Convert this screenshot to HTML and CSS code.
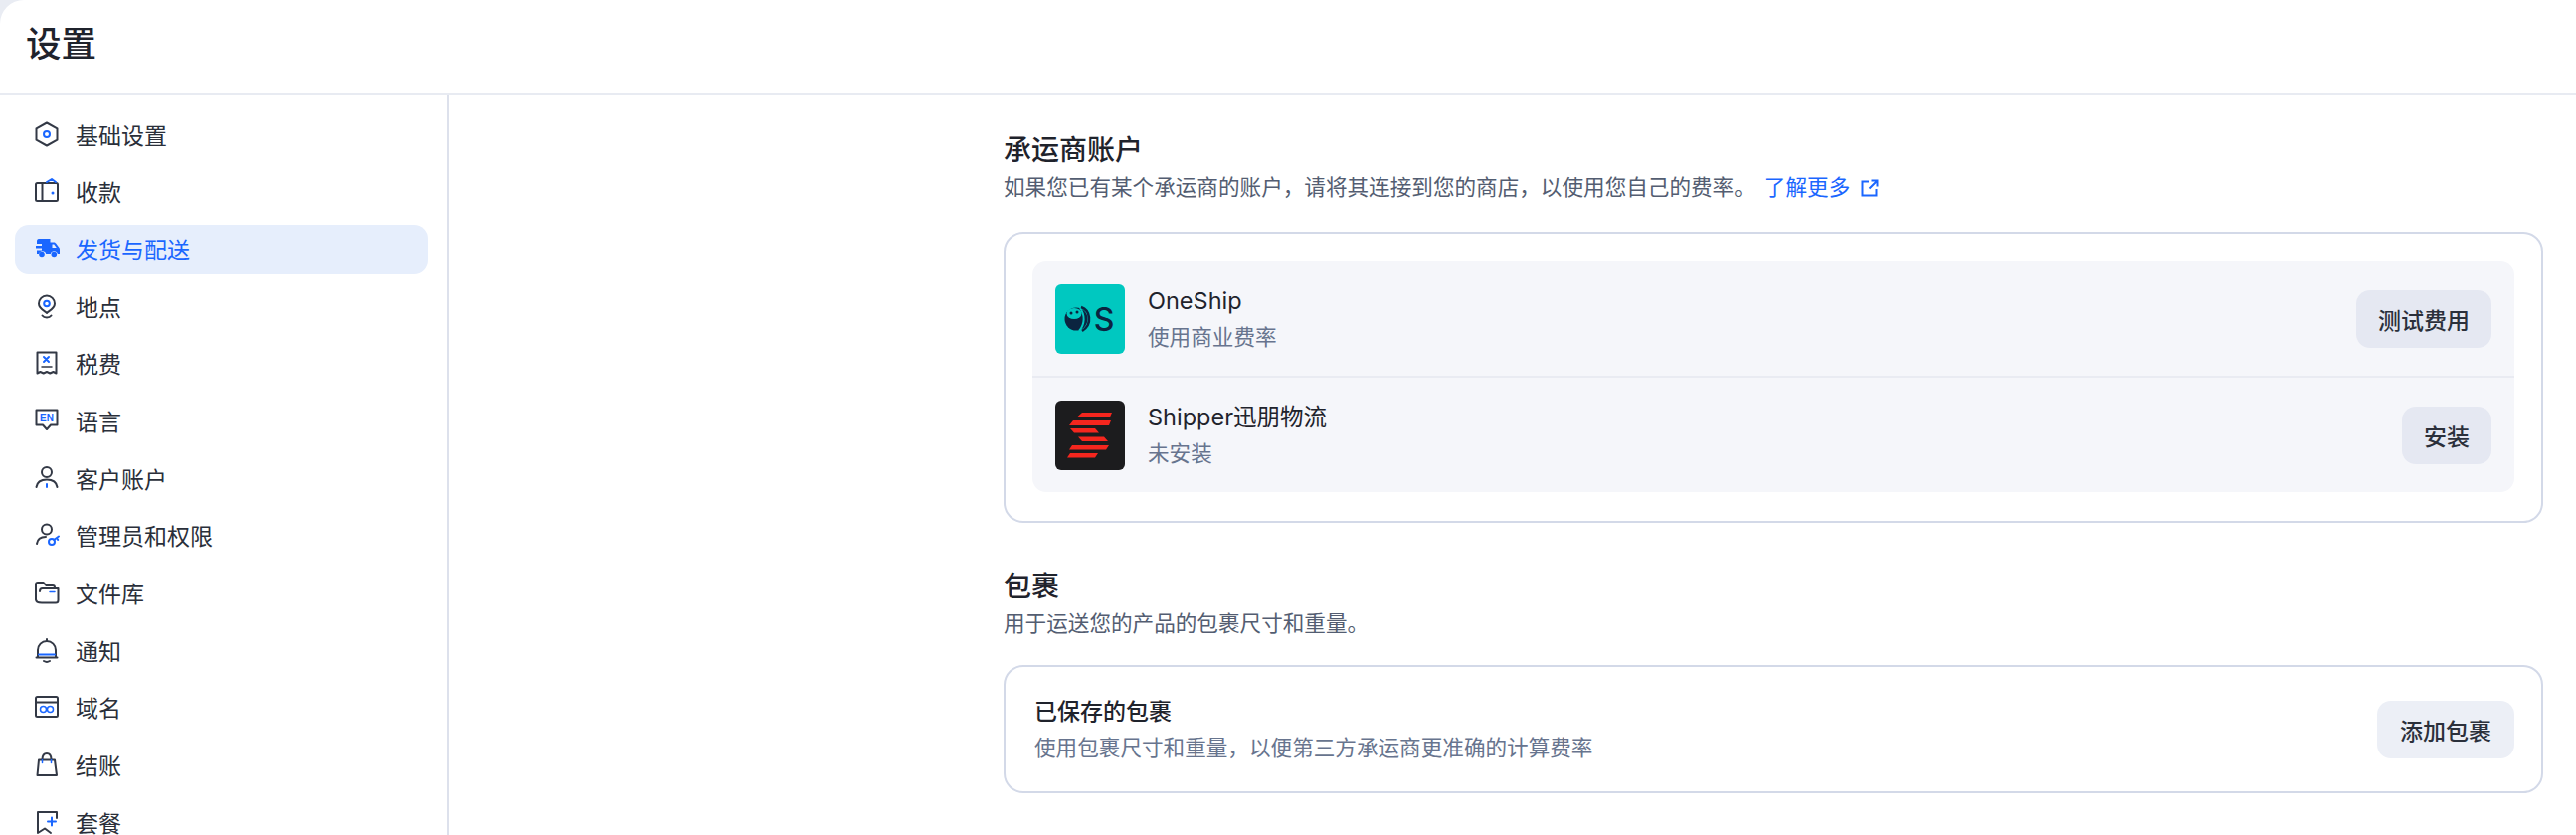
FILE: index.html
```html
<!DOCTYPE html>
<html>
	<head>
		<meta charset="utf-8">
		<title>设置</title>
		<link rel="stylesheet" href="styles.css">
	</head>
	<body>
		<div class="page">
			<header class="topbar">
				<h1 class="page-title">设置</h1>
			</header>
			<div class="layout">
				<ul class="nav">
					<li class="nav-item">
						<svg class="nav-icon" viewBox="0 0 28 28"><path class="ink" d="M14 2.500l10.500 5.800v11.400L14 25.500 3.500 19.700V8.300z"/><circle class="accent" cx="14" cy="14" r="3"/></svg>
						基础设置
					</li>
					<li class="nav-item">
						<svg class="nav-icon" viewBox="0 0 28 28"><rect class="ink" x="3" y="6" width="22" height="18" rx="1.500"/><path class="ink" d="M9.500 6v18"/><path class="accent" d="M14 5l5-3 4 3"/><circle class="dot" cx="20" cy="16" r="1.500"/></svg>
						收款
					</li>
					<li class="nav-item active">
						<svg class="nav-icon" viewBox="0 0 28 28"><path class="truck" d="M6 4h11.500v3.500H21c1 0 1.600.4 2.100 1.100l3.400 4.400c.4.500.5 1 .5 1.600V20h-2.200a3.600 3.600 0 0 0-7 0h-4.600a3.600 3.600 0 0 0-7 0H4v-4.500h5v-2H3v-2.500h6V9H4V6.500c0-1.500.6-2.500 2-2.500z"/><circle class="truck" cx="9" cy="20.500" r="2.800"/><circle class="truck" cx="21.300" cy="20.500" r="2.800"/><path class="window" d="M19.500 9.500h1.800l2.500 3.500h-4.300z"/></svg>
						发货与配送
					</li>
					<li class="nav-item">
						<svg class="nav-icon" viewBox="0 0 28 28"><path class="ink" d="M14 21c-1-1.800-8-4-8-9.500a8 8 0 0 1 16 0C22 17 15 19.200 14 21z"/><circle class="accent" cx="14" cy="11.500" r="2.800"/><path class="ink" d="M9.500 23.500c1 1.400 2.500 2 4.500 2s3.500-.6 4.500-2"/></svg>
						地点
					</li>
					<li class="nav-item">
						<svg class="nav-icon" viewBox="0 0 28 28"><path class="ink" d="M4.500 3.500h19v21l-3-1.500-3.200 1.500-3.300-1.500-3.300 1.500-3.200-1.500-3 1.500z"/><path class="accent" d="M11 8l5 5M16 8l-5 5"/><path class="ink thin" d="M9 18h10"/></svg>
						税费
					</li>
					<li class="nav-item">
						<svg class="nav-icon" viewBox="0 0 28 28"><path class="ink" d="M3.500 3.500h21v15H18l-4 4.500-4-4.500H3.500z"/><text class="en-mark" x="14" y="15">EN</text></svg>
						语言
					</li>
					<li class="nav-item">
						<svg class="nav-icon" viewBox="0 0 28 28"><circle class="ink" cx="14" cy="8" r="5"/><path class="ink" d="M3.500 23c.8-5 5-7.500 10.500-7.500S23.700 18 24.500 23"/><path class="accent" d="M14 20v3"/></svg>
						客户账户
					</li>
					<li class="nav-item">
						<svg class="nav-icon" viewBox="0 0 28 28"><circle class="ink" cx="14" cy="8.500" r="5"/><path class="ink" d="M4 23c.6-4.400 4-7 9-7"/><circle class="accent" cx="19" cy="21" r="3"/><path class="accent" d="M21.200 19l4.800-3.500M24 17l1.200 2"/></svg>
						管理员和权限
					</li>
					<li class="nav-item">
						<svg class="nav-icon" viewBox="0 0 28 28"><path class="ink" d="M3 21V6c0-1.200.8-2 2-2h5.500l3 3H20c1.200 0 2 .8 2 2v1"/><path class="ink" d="M7 13c0-1.600 1-3 2.600-3H25.500v12c0 1.500-.8 2.500-2.500 2.500H9c-2 0-6 0-6-3.500"/><path class="accent thin" d="M17 13.500h5"/></svg>
						文件库
					</li>
					<li class="nav-item">
						<svg class="nav-icon" viewBox="0 0 28 28"><path class="ink" d="M14 3v2M5 21v-7a9 9 0 0 1 18 0v7M3.500 21.500h21M11 25c1.600 1 4.400 1 6 0"/><path class="accent" d="M6 18.500h16"/></svg>
						通知
					</li>
					<li class="nav-item">
						<svg class="nav-icon" viewBox="0 0 28 28"><rect class="ink" x="3" y="4" width="22" height="20" rx="1.500"/><path class="ink" d="M3 9.500h22"/><circle class="accent thin" cx="10.500" cy="16.500" r="3"/><circle class="accent thin" cx="17.500" cy="16.500" r="3"/></svg>
						域名
					</li>
					<li class="nav-item">
						<svg class="nav-icon" viewBox="0 0 28 28"><path class="ink" d="M6 9.500h16l2 15.500H4.500z"/><path class="ink" d="M9.500 9.500C9.500 5 11 3 14 3s4.500 2 4.500 6.500"/><path class="accent thin" d="M9.500 9.500v3M18.500 9.500v3"/></svg>
						结账
					</li>
					<li class="nav-item">
						<svg class="nav-icon" viewBox="0 0 28 28"><path class="ink" d="M24 10V4H5v21l7-4.500 6 4.500"/><path class="accent" d="M19 9.500v8M15 13.500h8"/></svg>
						套餐
					</li>
				</ul>
				<main class="content">
					<section class="block">
						<h2 class="block-title">承运商账户</h2>
						<p class="block-desc">如果您已有某个承运商的账户，请将其连接到您的商店，以使用您自己的费率。 <a class="more-link" href="#">了解更多<svg class="link-icon" viewBox="0 0 18 18"><path d="M8 2.500H1.500v14h14V10M10.500 1.500h6v6M16.500 1.500l-8 8"/></svg></a></p>
						<div class="card card-list">
							<div class="carriers">
								<div class="carrier">
									<div class="logo logo-oneship">
										<svg viewBox="0 0 70 70"><circle class="os-dark" cx="21" cy="35" r="11.500"/><ellipse class="os-light" cx="19" cy="29.500" rx="7.500" ry="5.500"/><circle class="os-dark" cx="16" cy="29" r="1.500"/><circle class="os-dark" cx="22" cy="28" r="1.500"/><path class="os-cut" d="M25 24c5 7 5 16-1 23"/><path class="os-ring" d="M26 23c9 3 12 17 1 24"/><text class="os-s" x="49" y="46.500">S</text></svg>
									</div>
									<div class="carrier-text">
										<div class="carrier-name">OneShip</div>
										<div class="carrier-note">使用商业费率</div>
									</div>
									<button class="btn btn-tinted">测试费用</button>
								</div>
								<div class="carrier">
									<div class="logo logo-shipper">
										<svg viewBox="0 0 70 70"><path class="sh-bar" d="M27 12h30l-2 4.500H22zM18 20h38l-2 5H14zM15 28h25l4 4.500H19zM23 36.500h26l4 4.500H27zM17 45h37l-3 4.500H14zM15 53h28l-3 4.500H12z"/></svg>
									</div>
									<div class="carrier-text">
										<div class="carrier-name">Shipper迅朋物流</div>
										<div class="carrier-note">未安装</div>
									</div>
									<button class="btn btn-tinted">安装</button>
								</div>
							</div>
						</div>
					</section>
					<section class="block">
						<h2 class="block-title">包裹</h2>
						<p class="block-desc">用于运送您的产品的包裹尺寸和重量。</p>
						<div class="card card-row">
							<div class="carrier-text">
								<div class="saved-title">已保存的包裹</div>
								<div class="carrier-note">使用包裹尺寸和重量，以便第三方承运商更准确的计算费率</div>
							</div>
							<button class="btn btn-wide">添加包裹</button>
						</div>
					</section>
				</main>
			</div>
		</div>
	</body>
</html>
```

FILE: styles.css
```css
*{
	margin: 0;
	padding: 0;
	box-sizing: border-box;
}
ul{
	list-style: none;
}
a{
	text-decoration: none;
}
html,body{
	height: 100%;
	overflow: hidden;
}
body{
	background-color: #e9ecf3;
	color: #1f232c;
	font-family: Inter, "Noto Sans CJK SC", sans-serif;
}
.page{
	height: 100%;
	background-color: #fff;
	border-top-left-radius: 24px;
	display: flex;
	flex-direction: column;
}
.topbar{
	flex: none;
	height: 96px;
	padding-left: 26px;
	display: flex;
	align-items: center;
	border-bottom: 2px solid #e8ebf2;
}
.page-title{
	font-size: 35.500px;
	font-weight: 500;
	line-height: 46px;
	margin-top: -5px;
}
.layout{
	flex: 1;
	display: flex;
	min-height: 0;
}

/* sidebar */
.nav{
	flex: none;
	width: 451px;
	padding: 15px 19px 0 15px;
	border-right: 2px solid #dde1ec;
	display: flex;
	flex-direction: column;
	gap: 7.700px;
}
.nav-item{
	flex: none;
	height: 50px;
	padding: 0 0 3px 18px;
	display: flex;
	align-items: center;
	gap: 15px;
	border-radius: 14px;
	font-size: 23px;
	color: #2a2f3a;
}
.nav-item.active{
	background-color: #e6eefc;
	color: #1a66ff;
}
.nav-icon{
	flex: none;
	width: 28px;
	height: 28px;
	fill: none;
}
.ink{
	stroke: #333946;
	stroke-width: 2;
	stroke-linejoin: round;
	stroke-linecap: round;
	fill: none;
}
.accent{
	stroke: #1a66ff;
	stroke-width: 2;
	stroke-linecap: round;
	stroke-linejoin: round;
	fill: none;
}
.thin{
	stroke-width: 1.500;
}
.dot,.truck{
	fill: #1a66ff;
}
.window{
	fill: #e6eefc;
}
.en-mark{
	fill: #1a66ff;
	font-family: "Liberation Sans", sans-serif;
	font-size: 10px;
	font-weight: 700;
	text-anchor: middle;
}

/* content */
.content{
	flex: 1;
	padding: 36px 33px 0 558px;
	display: flex;
	flex-direction: column;
	gap: 45px;
}
.block-title{
	font-size: 28px;
	font-weight: 500;
	line-height: 38px;
}
.block-desc{
	font-size: 21.600px;
	line-height: 32px;
	margin-top: 2px;
	color: #535d71;
}
.more-link{
	color: #1a66ff;
	margin-left: 3px;
}
.link-icon{
	width: 18px;
	height: 18px;
	margin-left: 11px;
	vertical-align: -2px;
	fill: none;
	stroke: #1a66ff;
	stroke-width: 2;
}
.card{
	margin-top: 29px;
	border: 2px solid #d3d9e8;
	border-radius: 20px;
}
.card-list{
	padding: 28px 27px 29px;
}
.card-row{
	height: 129px;
	margin-top: 26px;
	padding: 0 27px 0 29px;
	display: flex;
	align-items: center;
	justify-content: space-between;
}
.carriers{
	background-color: #f5f6fa;
	border-radius: 14px;
}
.carrier{
	height: 115px;
	padding: 0 23px;
	display: flex;
	align-items: center;
	gap: 23px;
}
.carrier + .carrier{
	border-top: 2px solid #e9ebf2;
	height: 117px;
}
.logo{
	flex: none;
	width: 70px;
	height: 70px;
	border-radius: 6px;
	overflow: hidden;
}
.logo svg{
	display: block;
	width: 100%;
	height: 100%;
}
.logo-oneship{
	background-color: #00c8c0;
}
.logo-shipper{
	background-color: #1c1c1e;
}
.os-dark{
	fill: #0b2440;
}
.os-light{
	fill: #00c8c0;
}
.os-cut{
	fill: none;
	stroke: #00c8c0;
	stroke-width: 2;
}
.os-ring{
	fill: none;
	stroke: #0b2440;
	stroke-width: 2.500;
}
.os-s{
	fill: #0b2440;
	font-family: Inter, sans-serif;
	font-size: 32px;
	font-weight: 500;
	text-anchor: middle;
}
.sh-bar{
	fill: #f5261e;
}
.carrier-text{
	flex: 1;
	min-width: 0;
}
.carrier-name{
	font-size: 23.500px;
	line-height: 32px;
}
.saved-title{
	font-size: 23px;
	font-weight: 500;
	line-height: 32px;
}
.carrier-note{
	font-size: 21.600px;
	line-height: 30px;
	margin-top: 5px;
	color: #67748e;
}
.btn{
	flex: none;
	height: 58px;
	padding: 0 22px;
	border: none;
	border-radius: 14px;
	background-color: #eceff6;
	color: #2b303b;
	font-family: inherit;
	font-size: 23px;
	font-weight: 500;
}
.btn-tinted{
	background-color: #e5e8f2;
}
.btn-wide{
	padding: 0 23px;
}
```
